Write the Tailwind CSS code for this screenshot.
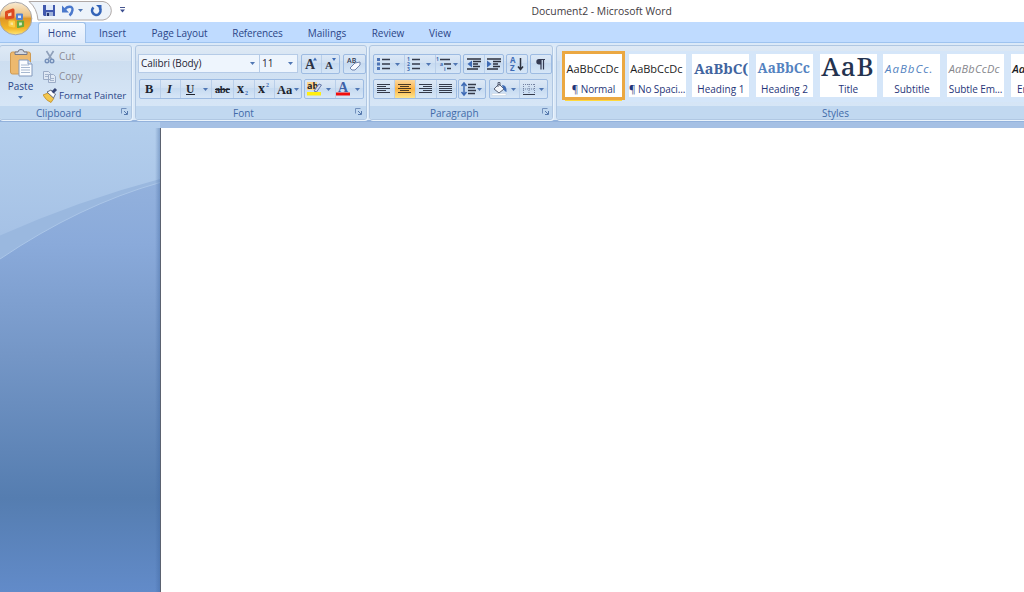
<!DOCTYPE html>
<html lang="en">
<head>
    <meta charset="UTF-8">
    <meta name="viewport" content="width=device-width, initial-scale=1.0">
    <title>Document2 - Microsoft Word</title>
    <script src="https://cdn.jsdelivr.net/npm/@tailwindcss/browser@4"></script>
    <style>
        body {
            font-family: 'Open Sans', 'Noto Sans', sans-serif;
        }
        .btns {
            display: flex;
            border: 1px solid #9dbbe2;
            border-radius: 2px;
            background: linear-gradient(#dce8f6, #d0e0f2 45%, #c6daf0 46%, #d6e6f7);
            height: 20px;
        }
        .btns > * {
            height: 18px;
            display: block;
            flex: none;
        }
        .btns > * + * {
            box-shadow: inset 1px 0 0 #b9cfea;
        }
        .group {
            display: flex;
            flex-direction: column;
            flex: none;
            height: 75px;
            border: 1px solid #b0c7e2;
            border-radius: 3px;
            background: linear-gradient(#dee9f5, #d5e3f2 20%, #cddef0 21%, #d9e8f8);
            box-shadow: 1px 1px 0 #e9f3fc;
        }
        .label {
            height: 13px;
            background: #c1d8f0;
            border-radius: 0 0 2px 2px;
        }
    </style>
</head>
<body class="w-[1024px] h-[592px] overflow-hidden bg-white text-[10px] font-medium text-[#2b4587] flex flex-col whitespace-nowrap">
    <!-- Shared shapes -->
    <svg width="0" height="0" class="absolute">
        <defs>
            <path id="arrow" d="M0 0h5L2.5 3z" fill="#4f76b3"/>
            <g id="launcher" fill="none" stroke="#7391bd">
                <path d="M.5 5.500V.5H5.500"/>
                <path d="M3 3l3 3M6.500 3v3.500H3" stroke="#5679ad"/>
            </g>
            <linearGradient id="orb" x1="0" y1="0" x2="0" y2="1">
                <stop offset="0" stop-color="#f8ead2"/>
                <stop offset=".42" stop-color="#edc07c"/>
                <stop offset=".5" stop-color="#df9828"/>
                <stop offset=".8" stop-color="#f3b526"/>
                <stop offset="1" stop-color="#ffe77a"/>
            </linearGradient>
        </defs>
    </svg>

    <!-- Title bar -->
    <header class="relative flex h-[22px] flex-none">
        <svg width="136" height="22" viewBox="0 0 136 22" class="flex-none">
            <path d="M29 1.500H103a9.300 9.300 0 0 1 0 18.500H38Q37 8 29 1.500z" fill="#edf3fa" stroke="#b0a9a7"/>
            <!-- save -->
            <path d="M43 5h12v11H44l-1-1z" fill="#4058ae"/>
            <path d="M46 5h7v5h-7z" fill="#dfe9fa"/>
            <path d="M46 12h7v4h-7z" fill="#9fb2da"/><path d="M47 13h2v3h-2z" fill="#28386f"/>
            <!-- undo -->
            <path d="M65 9.500C67 6 73 5.500 72.500 10q-.3 3-3 5.500" fill="none" stroke="#4a78cc" stroke-width="2.400"/>
            <path d="M62 5.500v7h7z" fill="#4a78cc"/>
            <use href="#arrow" x="78" y="9"/>
            <!-- repeat -->
            <path d="M93.500 7.500A4.200 4.200 0 1 0 99.500 8" fill="none" stroke="#3464b8" stroke-width="2.600"/>
            <path d="M96 5h5.500v5.500z" fill="#3464b8"/>
            <path d="M120 7.500h5" stroke="#47568f"/><path d="M120 9.500h5l-2.500 3z" fill="#3d4f91"/>
        </svg>
        <h1 class="pl-[395.500px] pt-[4px] text-[10.400px] leading-[15px] text-[#3f3b42]">Document2 - Microsoft Word</h1>
        <!-- Office button hangs over the tab row -->
        <svg width="38" height="38" viewBox="0 0 38 38" class="absolute left-0 top-0 z-10">
            <circle cx="15.500" cy="18.500" r="16.300" fill="url(#orb)" stroke="#a8a7ab"/>
            <path d="M6.500 12.500l6.500-2.500v7l-6.500 1z" fill="#f7d9b8" stroke="#dd4a20" stroke-width="3" stroke-linejoin="round"/>
            <path d="M17 14.500h5v4.500h-5z" fill="#dbe5f5" stroke="#5583cf" stroke-width="2" stroke-linejoin="round"/>
            <path d="M9.500 21.500h4.500v5l-4.500-1z" fill="#f9e4a0" stroke="#fbcf44" stroke-width="2" stroke-linejoin="round"/>
            <path d="M18 21.500h5v4.500l-5 1z" fill="#e0edbf" stroke="#67a83c" stroke-width="2.200" stroke-linejoin="round"/>
        </svg>
    </header>

    <!-- Tabs -->
    <nav class="flex h-[21px] flex-none bg-[#bfdbff] border-b border-[#9ec3ef] pl-[38px] leading-[23px]">
        <a class="w-[48px] h-[21px] rounded-t-[3px] border border-b-0 border-[#9fc0e8] bg-gradient-to-b from-[#f2f8ff] to-[#dfeafa] text-center leading-[21px]">Home</a>
        <a class="w-[53px] text-center">Insert</a>
        <a class="w-[81px] text-center tracking-[-0.05px]">Page Layout</a>
        <a class="w-[75px] text-center tracking-[-0.15px]">References</a>
        <a class="w-[64px] text-center">Mailings</a>
        <a class="w-[58px] text-center">Review</a>
        <a class="w-[46px] text-center">View</a>
    </nav>

    <!-- Ribbon -->
    <div class="flex h-[79px] flex-none gap-[3px] bg-[#dbe9f8] border-b-2 border-[#93b2dc] pt-[2px]">
        <section class="group w-[133px] -ml-px">
            <div class="flex h-[60px]">
                <div class="w-[41px] flex flex-col items-center">
                    <svg width="30" height="33" viewBox="0 0 30 33">
                        <rect x="4.500" y="6" width="20" height="22" rx="2" fill="#edb96e" stroke="#cf9a52"/>
                        <path d="M9 8.500h12V6h-3q0-2.500-3-2.500T12 6H9z" fill="#d2d7e0" stroke="#75798a"/>
                        <path d="M13 14h9l4 4v12H13z" fill="#fbfdff" stroke="#8299bd"/>
                        <path d="M15 19h8M15 21.500h9M15 24h9M15 26.500h9" stroke="#a7b8d0"/>
                        <path d="M22 14v4h4" fill="#dce6f3" stroke="#8299bd"/>
                    </svg>
                    <span class="leading-[15px]">Paste</span>
                    <svg width="5" height="3" class="mt-[2px]"><use href="#arrow"/></svg>
                </div>
                <div class="pt-[1px] pl-[2px] leading-[19px]">
                    <div class="flex h-[20px] text-[#8b8b95]">
                        <svg width="16" height="19" viewBox="0 0 16 19"><path d="M3.500 4l5 8M10.500 4l-5 8" stroke="#8e9fb9" stroke-width="1.600"/><circle cx="4" cy="14" r="1.800" fill="none" stroke="#7590ba" stroke-width="1.400"/><circle cx="9" cy="14" r="1.800" fill="none" stroke="#7590ba" stroke-width="1.400"/></svg>
                        <span>Cut</span>
                    </div>
                    <div class="flex h-[19px] text-[#8b8b95]">
                        <svg width="16" height="19" viewBox="0 0 16 19"><path d="M.5 4.500h5l2 2v6h-7zM5.500 7.500h5l2 2v6h-7z" fill="#dfe8f4" stroke="#9aabc6"/><path d="M2 7.500h3M2 9.500h3M7 11.500h4M7 13.500h4" stroke="#a4b4cc"/></svg>
                        <span>Copy</span>
                    </div>
                    <div class="flex h-[19px]">
                        <svg width="16" height="19" viewBox="0 0 16 19"><path d="M0 9l5-2 6 5-3 4.500q-5-2-8-7.500z" fill="#f3c74c" stroke="#c8983a"/><path d="M4 6l4-2 4.500 4-2 4z" fill="#fff" stroke="#636d83"/><path d="M9.500 6.500l3.500-3.500" stroke="#354575" stroke-width="3"/></svg>
                        <span class="text-[9.800px] tracking-[-0.080px]">Format Painter</span>
                    </div>
                </div>
            </div>
            <div class="label flex pl-[36px] leading-[14px] text-[#426aa8]"><span class="w-[85px]">Clipboard</span><svg width="8" height="8" class="mt-[2px]"><use href="#launcher"/></svg></div>
        </section>

        <section class="group w-[232px]">
            <div class="h-[60px] pl-[3px] pt-[8px]">
                <div class="flex h-[20px]">
                    <div class="-ml-px flex w-[122px] h-[19px] items-center justify-between border border-[#b5cbe7] bg-[#eef5fd] pl-[2px] pr-[4px] text-[#1e2433]"><span class="tracking-[-0.1px]">Calibri (Body)</span><svg width="5" height="3"><use href="#arrow"/></svg></div>
                    <div class="-ml-px flex w-[39px] h-[19px] items-center justify-between border border-[#b5cbe7] bg-[#eef5fd] pl-[2px] pr-[4px] text-[#1e2433]"><span>11</span><svg width="5" height="3"><use href="#arrow"/></svg></div>
                    <div class="btns ml-[3px] w-[39px]">
                        <svg width="19" height="18" class="font-['Liberation_Serif'] font-bold" fill="#2c3346"><text x="3" y="14" font-size="14">A</text><path d="M11 5.500l2-3 2 3z" fill="#3e6bb5"/></svg>
                        <svg width="18" height="18" class="font-['Liberation_Serif'] font-bold" fill="#2c3346"><text x="4" y="14" font-size="11">A</text><path d="M11 3h4l-2 3z" fill="#3e6bb5"/></svg>
                    </div>
                    <div class="btns ml-[3px] w-[23px]">
                        <svg width="21" height="18"><text x="3" y="8" font-size="7" font-weight="600" fill="#333b52">AB</text><path d="M6 13l5-5 5-1v3l-5 5H8z" fill="#f8faff" stroke="#6f82ab"/></svg>
                    </div>
                </div>
                <div class="mt-[5px] flex">
                    <div class="btns w-[163px] font-['Liberation_Serif'] font-bold text-[#20242e]">
                        <svg width="20" height="18" fill="currentColor"><text x="5" y="13" font-size="12.500">B</text></svg>
                        <svg width="20" height="18" fill="currentColor"><text x="7" y="13" font-size="12.500" font-style="italic">I</text></svg>
                        <svg width="31" height="18" fill="currentColor"><text x="6" y="12.500" font-size="11.500">U</text><path d="M6 14.500h9" stroke="#20242e"/><use href="#arrow" x="23" y="8"/></svg>
                        <svg width="22" height="18" fill="currentColor"><text x="4" y="12.500" font-size="10.500" textLength="15">abc</text><path d="M4 9.500h15" stroke="#20242e"/></svg>
                        <svg width="21" height="18" fill="currentColor"><text x="4" y="13" font-size="14">x</text><text x="12" y="15" font-size="6" fill="#3e6bb5">2</text></svg>
                        <svg width="20" height="18" fill="currentColor"><text x="4" y="13" font-size="14">x</text><text x="12" y="7" font-size="6" fill="#3e6bb5">2</text></svg>
                        <svg width="27" height="18" fill="currentColor"><text x="3" y="13.500" font-size="12.500">Aa</text><use href="#arrow" x="20" y="8"/></svg>
                    </div>
                    <div class="btns ml-[2px] w-[60px]">
                        <svg width="30" height="18"><path d="M2 2h10v8H2z" fill="#fbd58c"/><text x="2" y="9" font-size="9" font-weight="700" fill="#20242e">ab</text><path d="M9 11l5-7 2.500 1-5 7z" fill="#cfd9ec" stroke="#6579aa"/><path d="M2 12h14v3.500H2z" fill="#ffee10"/><use href="#arrow" x="21" y="8"/></svg>
                        <svg width="28" height="18"><text x="3" y="12" font-size="14" font-weight="700" fill="#3e61a8" class="font-['Liberation_Serif']">A</text><path d="M1 12.500h14v3H1z" fill="#f20d0d"/><use href="#arrow" x="20" y="8"/></svg>
                    </div>
                </div>
            </div>
            <div class="label flex pl-[97px] leading-[14px] text-[#426aa8]"><span class="w-[122px]">Font</span><svg width="8" height="8" class="mt-[2px]"><use href="#launcher"/></svg></div>
        </section>

        <section class="group w-[184px] -ml-px">
            <div class="h-[60px] pl-[3px] pt-[8px]">
                <div class="flex h-[20px]">
                    <div class="btns w-[88px]">
                        <svg width="30" height="18"><path d="M3 3h3v3H3zM3 7.500h3v3H3zM3 12h3v3H3z" fill="#4d74b5"/><path d="M8 4.500h8M8 9h8M8 13.500h8" stroke="#343a4a" stroke-width="1.300"/><use href="#arrow" x="21" y="8"/></svg>
                        <svg width="31" height="18"><g font-size="5" font-weight="700" fill="#3d68ad"><text x="3" y="6">1</text><text x="3" y="11">2</text><text x="3" y="16">3</text></g><path d="M8 4.500h8M8 9h8M8 13.500h8" stroke="#343a4a" stroke-width="1.300"/><use href="#arrow" x="22" y="8"/></svg>
                        <svg width="25" height="18"><g font-size="5" font-weight="700" fill="#3d68ad"><text x="1" y="6">1</text><text x="5" y="11">a</text><text x="9" y="16">i</text></g><path d="M5 4.500h10M9 9h7M12 13.500h4" stroke="#343a4a" stroke-width="1.300"/><use href="#arrow" x="18" y="8"/></svg>
                    </div>
                    <div class="btns ml-[2px] w-[41px]">
                        <svg width="20" height="18"><path d="M3 4h14M9 6.500h8M9 9h5M9 11.500h7M3 14h11" stroke="#2c313e" stroke-width="1.400"/><path d="M8 5.500v7L3.500 9z" fill="#3e6bb5"/></svg>
                        <svg width="19" height="18"><path d="M3 4h14M9 6.500h8M9 9h5M9 11.500h7M3 14h11" stroke="#2c313e" stroke-width="1.400"/><path d="M3 5.500v7L7.500 9z" fill="#3e6bb5"/></svg>
                    </div>
                    <div class="btns ml-[2px] w-[22px]">
                        <svg width="20" height="18" font-size="8" font-weight="700"><text x="3" y="8" fill="#3e6bb5">A</text><text x="3" y="16" fill="#3e6bb5">Z</text><path d="M13.500 3v11M11 11.500l2.500 3 2.500-3" stroke="#2c313e" stroke-width="1.500" fill="none"/></svg>
                    </div>
                    <div class="btns ml-[2px] w-[22px]">
                        <svg width="20" height="18"><path d="M14 4.500H8M10 4v10.500M12.500 4v10.500" stroke="#343a52" fill="none" stroke-width="1.200"/><path d="M10 4H8a2.700 2.700 0 0 0 0 5.400h2z" fill="#343a52"/></svg>
                    </div>
                </div>
                <div class="mt-[5px] flex">
                    <div class="btns w-[84px]">
                        <svg width="20" height="18"><path d="M3 4.500h13M3 6.500h9M3 8.500h13M3 10.500h9M3 12.500h13" stroke="#343a4a" shape-rendering="crispEdges"/></svg>
                        <svg width="21" height="18" class="bg-gradient-to-b from-[#fbd79c] via-[#fbb343] to-[#fde58b]"><path d="M4 4.500h13M6 6.500h9M4 8.500h13M6 10.500h9M4 12.500h13" stroke="#4b3922" shape-rendering="crispEdges"/></svg>
                        <svg width="21" height="18"><path d="M4 4.500h13M8 6.500h9M4 8.500h13M8 10.500h9M4 12.500h13" stroke="#343a4a" shape-rendering="crispEdges"/></svg>
                        <svg width="20" height="18"><path d="M3 4.500h13M3 6.500h13M3 8.500h13M3 10.500h13M3 12.500h13" stroke="#343a4a" shape-rendering="crispEdges"/></svg>
                    </div>
                    <div class="btns ml-px w-[28px]">
                        <svg width="26" height="18"><path d="M9 4.500h8M9 7.500h7M9 10.500h8M9 13.500h7" stroke="#343a4a" stroke-width="1.300"/><path d="M5 3.500v11M2.500 6L5 3l2.500 3M2.500 12L5 15l2.500-3" stroke="#3e6bb5" stroke-width="1.500" fill="none"/><use href="#arrow" x="18" y="8"/></svg>
                    </div>
                    <div class="btns ml-[3px] w-[59px]">
                        <svg width="29" height="18"><path d="M4 9l5-5 5 5-5 4z" fill="#f4f7fb" stroke="#5a6377"/><path d="M8 7V2.500h2V6" fill="none" stroke="#5a6377"/><path d="M12 5q5 0 4.500 7-2.500-1-3.500-4z" fill="#3e6bb5"/><path d="M2 13.500h14v2H2z" fill="#fff" stroke="#c2cedd" stroke-width=".5"/><use href="#arrow" x="21" y="8"/></svg>
                        <svg width="28" height="18"><path d="M4.500 4v10M10 4v10M15.500 4v10M4 4.500h12M4 9h12" stroke="#7482a0" stroke-dasharray="1 1" fill="none"/><path d="M4 14.500h12" stroke="#343a4a"/><use href="#arrow" x="20" y="8"/></svg>
                    </div>
                </div>
            </div>
            <div class="label flex pl-[60px] leading-[14px] text-[#426aa8]"><span class="w-[112px]">Paragraph</span><svg width="8" height="8" class="mt-[2px]"><use href="#launcher"/></svg></div>
        </section>

        <section class="group w-[480px]">
            <div class="h-[60px] pt-[5px] pl-[3px]">
                <!-- Style gallery -->
                <div class="flex h-[51px] w-[475px] gap-[6.700px] bg-[#d5e6f9] [&>div]:flex-none [&>div]:w-[57px] [&>div]:h-[43px] [&>div]:mt-[3px] [&>div]:bg-white [&>div]:overflow-hidden [&_p]:h-[27px] [&_p]:overflow-hidden [&_p]:px-[1.500px] [&_p]:leading-[29px] [&_span]:block [&_span]:text-center [&_span]:leading-[16px] [&_span]:text-[#1f3579]">
                    <div class="ml-[5px] outline-3 outline-[#eba842] shadow-[0_4px_0_#ffd83c]"><p class="text-[11px] text-[#1b1b22]">AaBbCcDc</p><span class="tracking-[-0.1px]">¶ Normal</span></div>
                    <div><p class="text-[11px] text-[#1b1b22]">AaBbCcDc</p><span class="tracking-[-0.1px]">¶ No Spaci...</span></div>
                    <div><p class="text-[14.500px] font-bold text-[#41659f] font-['Noto_Serif','DejaVu_Serif']">AaBbC(</p><span>Heading 1</span></div>
                    <div><p class="text-[13.500px] font-bold text-[#5382c0] font-['Noto_Serif','DejaVu_Serif']">AaBbCc</p><span>Heading 2</span></div>
                    <div><p class="text-[26px] tracking-[0.8px] !leading-[24px] text-[#24334f] font-['Noto_Serif','DejaVu_Serif']">AaB</p><span>Title</span></div>
                    <div><p class="text-[11.500px] tracking-[1px] italic text-[#5382c0]">AaBbCc.</p><span>Subtitle</span></div>
                    <div><p class="text-[11px] italic text-[#86868b] tracking-[0.25px]">AaBbCcDc</p><span class="tracking-[-0.1px]">Subtle Em...</span></div>
                    <div><p class="text-[11px] italic font-semibold text-[#1b1b22]">AaBbCcDc</p><span>Emphasis</span></div>
                </div>
            </div>
            <div class="label pl-[265px] leading-[14px] text-[#426aa8]">Styles</div>
        </section>
    </div>

    <!-- Workspace -->
    <main class="flex flex-1 bg-[#a5c0e4]">
        <svg width="160" height="470" viewBox="0 122 160 470" class="flex-none">
            <defs>
                <linearGradient id="desk" x1="0" y1="122" x2="0" y2="592" gradientUnits="userSpaceOnUse">
                    <stop offset="0" stop-color="#9bb8e0"/>
                    <stop offset=".26" stop-color="#8aaada"/>
                    <stop offset=".5" stop-color="#7496c6"/>
                    <stop offset=".8" stop-color="#557db0"/>
                    <stop offset="1" stop-color="#628bc9"/>
                </linearGradient>
                <linearGradient id="sky" x1="0" y1="122" x2="0" y2="240" gradientUnits="userSpaceOnUse">
                    <stop offset="0" stop-color="#b4cfed"/>
                    <stop offset="1" stop-color="#a5c1e5"/>
                </linearGradient>
                <linearGradient id="edge">
                    <stop offset="0" stop-color="#3c639c" stop-opacity="0"/>
                    <stop offset="1" stop-color="#3c639c" stop-opacity=".4"/>
                </linearGradient>
            </defs>
            <path d="M0 122h160v470H0z" fill="url(#desk)"/>
            <path d="M0 122H160V182.500Q80 205 0 259z" fill="#9ab8df"/>
            <path d="M0 259Q80 205 160 182.500" fill="none" stroke="#abc6e8"/>
            <path d="M0 122H160V179Q80 200 0 235.500z" fill="url(#sky)"/>
            <path d="M155 128h5v464h-5z" fill="url(#edge)"/>
        </svg>
        <div class="mt-[6px] flex-1 border-l border-[#5b6270] bg-white"></div>
    </main>
</body>
</html>
